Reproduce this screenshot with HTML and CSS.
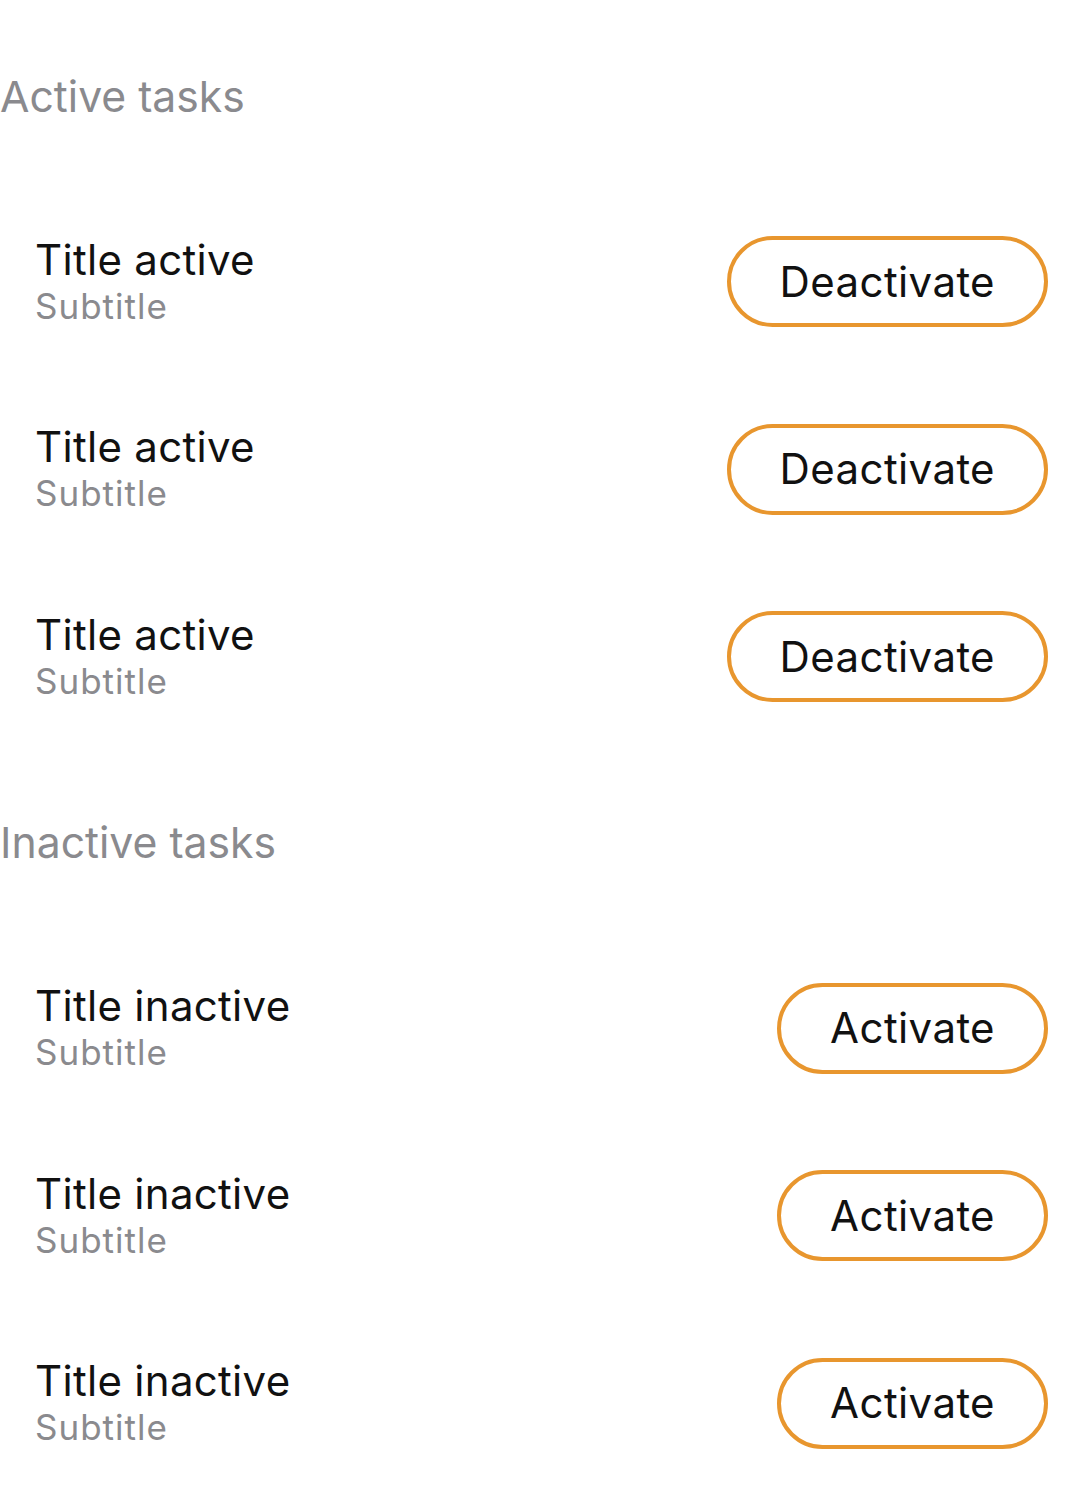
FILE: index.html
```html
<!DOCTYPE html>
<html>
<head>
<meta charset="utf-8">
<link rel="stylesheet" href="styles.css">
</head>
<body>
<main class="page">
  <section class="group">
    <h2 class="group-title">Active tasks</h2>
    <div class="row">
      <div class="text"><div class="title">Title active</div><div class="subtitle">Subtitle</div></div>
      <button class="btn">Deactivate</button>
    </div>
    <div class="row">
      <div class="text"><div class="title">Title active</div><div class="subtitle">Subtitle</div></div>
      <button class="btn">Deactivate</button>
    </div>
    <div class="row">
      <div class="text"><div class="title">Title active</div><div class="subtitle">Subtitle</div></div>
      <button class="btn">Deactivate</button>
    </div>
  </section>
  <section class="group">
    <h2 class="group-title">Inactive tasks</h2>
    <div class="row">
      <div class="text"><div class="title">Title inactive</div><div class="subtitle">Subtitle</div></div>
      <button class="btn">Activate</button>
    </div>
    <div class="row">
      <div class="text"><div class="title">Title inactive</div><div class="subtitle">Subtitle</div></div>
      <button class="btn">Activate</button>
    </div>
    <div class="row">
      <div class="text"><div class="title">Title inactive</div><div class="subtitle">Subtitle</div></div>
      <button class="btn">Activate</button>
    </div>
  </section>
</main>
</body>
</html>
```
FILE: styles.css
```css
html, body {
  margin: 0;
  padding: 0;
  background: #ffffff;
}
body {
  font-family: Inter, "Noto Sans", sans-serif;
}
.page {
  padding-top: 4px;
}
.group-title {
  margin: 0;
  height: 184px;
  display: flex;
  align-items: center;
  font-size: 42.7px;
  font-weight: 400;
  color: #8a8a8e;
}
.row {
  height: 187.5px;
  display: flex;
  align-items: center;
  justify-content: space-between;
  padding: 0 34px 0 35px;
  box-sizing: border-box;
}
.text {
  display: flex;
  flex-direction: column;
}
.title {
  font-size: 42px;
  line-height: 48px;
  letter-spacing: 0.3px;
  color: #111111;
}
.subtitle {
  font-size: 35px;
  line-height: 44px;
  letter-spacing: 1px;
  color: #8a8a8e;
}
.btn {
  font-family: inherit;
  font-size: 42px;
  letter-spacing: 0.4px;
  color: #111111;
  background: #ffffff;
  border: 4px solid #e8962e;
  border-radius: 46px;
  height: 91px;
  padding: 0 49px;
  line-height: 1;
}
```
